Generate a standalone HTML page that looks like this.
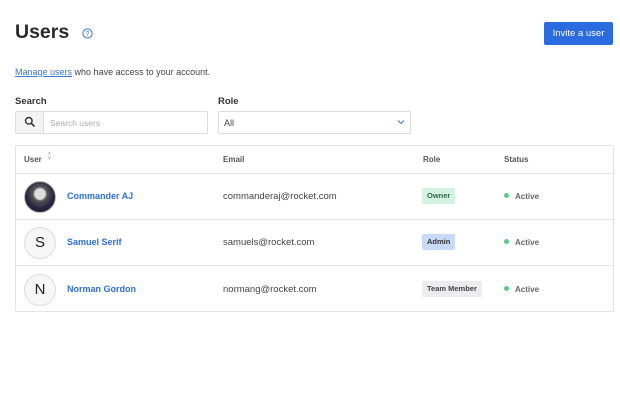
<!DOCTYPE html>
<html><head><style>
*{box-sizing:border-box;margin:0;padding:0}
body{width:620px;height:412px;background:#fff;font-family:"Liberation Sans",sans-serif;color:#333;position:relative;overflow:hidden}
.a{position:absolute}
h1{position:absolute;left:15px;top:21px;font-size:19.5px;font-weight:bold;color:#2a2a2a}
.btn{left:544px;top:22px;width:69px;height:23px;background:#2b6be0;color:#fff;font-size:9.5px;border-radius:2px;text-align:center;line-height:23px}
.lbl{font-size:9.5px;font-weight:bold;color:#333}
.box{border:1px solid #dcdcdc;height:23px;border-radius:2px}
.tbl{left:15px;top:145px;width:599px;height:167px;border:1px solid #e4e4e4;border-radius:2px}
.row{position:absolute;left:0;width:597px;border-top:1px solid #e6e6e6}
.th{font-size:8px;font-weight:bold;color:#555}
.av{width:32px;height:32px;border-radius:50%;border:1px solid #ddd;background:#f6f6f6;text-align:center;line-height:30px;font-size:15px;color:#222}
.nm{font-size:9px;font-weight:bold;color:#2f6fd0}
.em{font-size:9.5px;color:#444}
.tag{font-size:7.5px;font-weight:bold;padding:0 5px;height:16px;line-height:16px;border-radius:2px}
.st{font-size:8px;font-weight:bold;color:#666}
.st:before{content:"";display:inline-block;width:5px;height:5px;border-radius:50%;background:#5cc98a;margin-right:6px;vertical-align:1px}
</style></head><body>
<h1>Users</h1>
<svg class="a" style="left:82px;top:28px" width="11" height="11" viewBox="0 0 11 11"><circle cx="5.5" cy="5.5" r="4.6" fill="none" stroke="#3b78d8" stroke-width="1"/><text x="5.5" y="8" font-size="7" text-anchor="middle" fill="#3b78d8" font-family="Liberation Sans">?</text></svg>
<div class="a btn">Invite a user</div>
<div class="a" style="left:15px;top:67px;font-size:9px;color:#444"><span style="color:#3b78d8;text-decoration:underline">Manage users</span> who have access to your account.</div>
<div class="a lbl" style="left:15px;top:96px">Search</div>
<div class="a lbl" style="left:218px;top:96px">Role</div>
<div class="a box" style="left:15px;top:111px;width:193px"></div>
<div class="a" style="left:16px;top:112px;width:28px;height:21px;background:#f3f3f3;border-right:1px solid #ddd"></div>
<svg class="a" style="left:24px;top:116px" width="12" height="12" viewBox="0 0 12 12"><circle cx="4.8" cy="4.8" r="3.3" fill="none" stroke="#333" stroke-width="1.4"/><path d="M7.2 7.2L10.5 10.5" stroke="#333" stroke-width="1.6"/></svg>
<div class="a" style="left:50px;top:118px;font-size:8.5px;color:#aaa">Search users</div>
<div class="a box" style="left:218px;top:111px;width:193px"></div>
<div class="a" style="left:224px;top:118px;font-size:9px;color:#444">All</div>
<svg class="a" style="left:397px;top:119px" width="8" height="6" viewBox="0 0 8 6"><path d="M1 1.5L4 4.5L7 1.5" fill="none" stroke="#3b78d8" stroke-width="1"/></svg>
<div class="a tbl">
<div class="a th" style="left:8px;top:9px">User</div>
<div class="a" style="left:32px;top:6px;font-size:5px;color:#777;line-height:5px">˄<br>˅</div>
<div class="a th" style="left:207px;top:9px">Email</div>
<div class="a th" style="left:407px;top:9px">Role</div>
<div class="a th" style="left:488px;top:9px">Status</div>
<div class="row" style="top:27px;height:46px">
 <div class="a av" style="left:8px;top:7px;background:radial-gradient(circle at 50% 40%,#ddd 0 22%,#555 30%,#2a2440 60%,#1a1a2a);border-color:#bbb"></div>
 <div class="a nm" style="left:51px;top:17px">Commander AJ</div>
 <div class="a em" style="left:207px;top:17px">commanderaj@rocket.com</div>
 <div class="a tag" style="left:406px;top:14px;background:#d4f3df;color:#2e6b55">Owner</div>
 <div class="a st" style="left:488px;top:18px">Active</div>
</div>
<div class="row" style="top:73px;height:47px">
 <div class="a av" style="left:8px;top:7px">S</div>
 <div class="a nm" style="left:51px;top:17px">Samuel Serif</div>
 <div class="a em" style="left:207px;top:17px">samuels@rocket.com</div>
 <div class="a tag" style="left:406px;top:14px;background:#c8daf7;color:#333">Admin</div>
 <div class="a st" style="left:488px;top:18px">Active</div>
</div>
<div class="row" style="top:119px;height:47px">
 <div class="a av" style="left:8px;top:8px">N</div>
 <div class="a nm" style="left:51px;top:18px">Norman Gordon</div>
 <div class="a em" style="left:207px;top:18px">normang@rocket.com</div>
 <div class="a tag" style="left:406px;top:15px;background:#ececef;color:#444">Team Member</div>
 <div class="a st" style="left:488px;top:19px">Active</div>
</div>
</div>
</body></html>
